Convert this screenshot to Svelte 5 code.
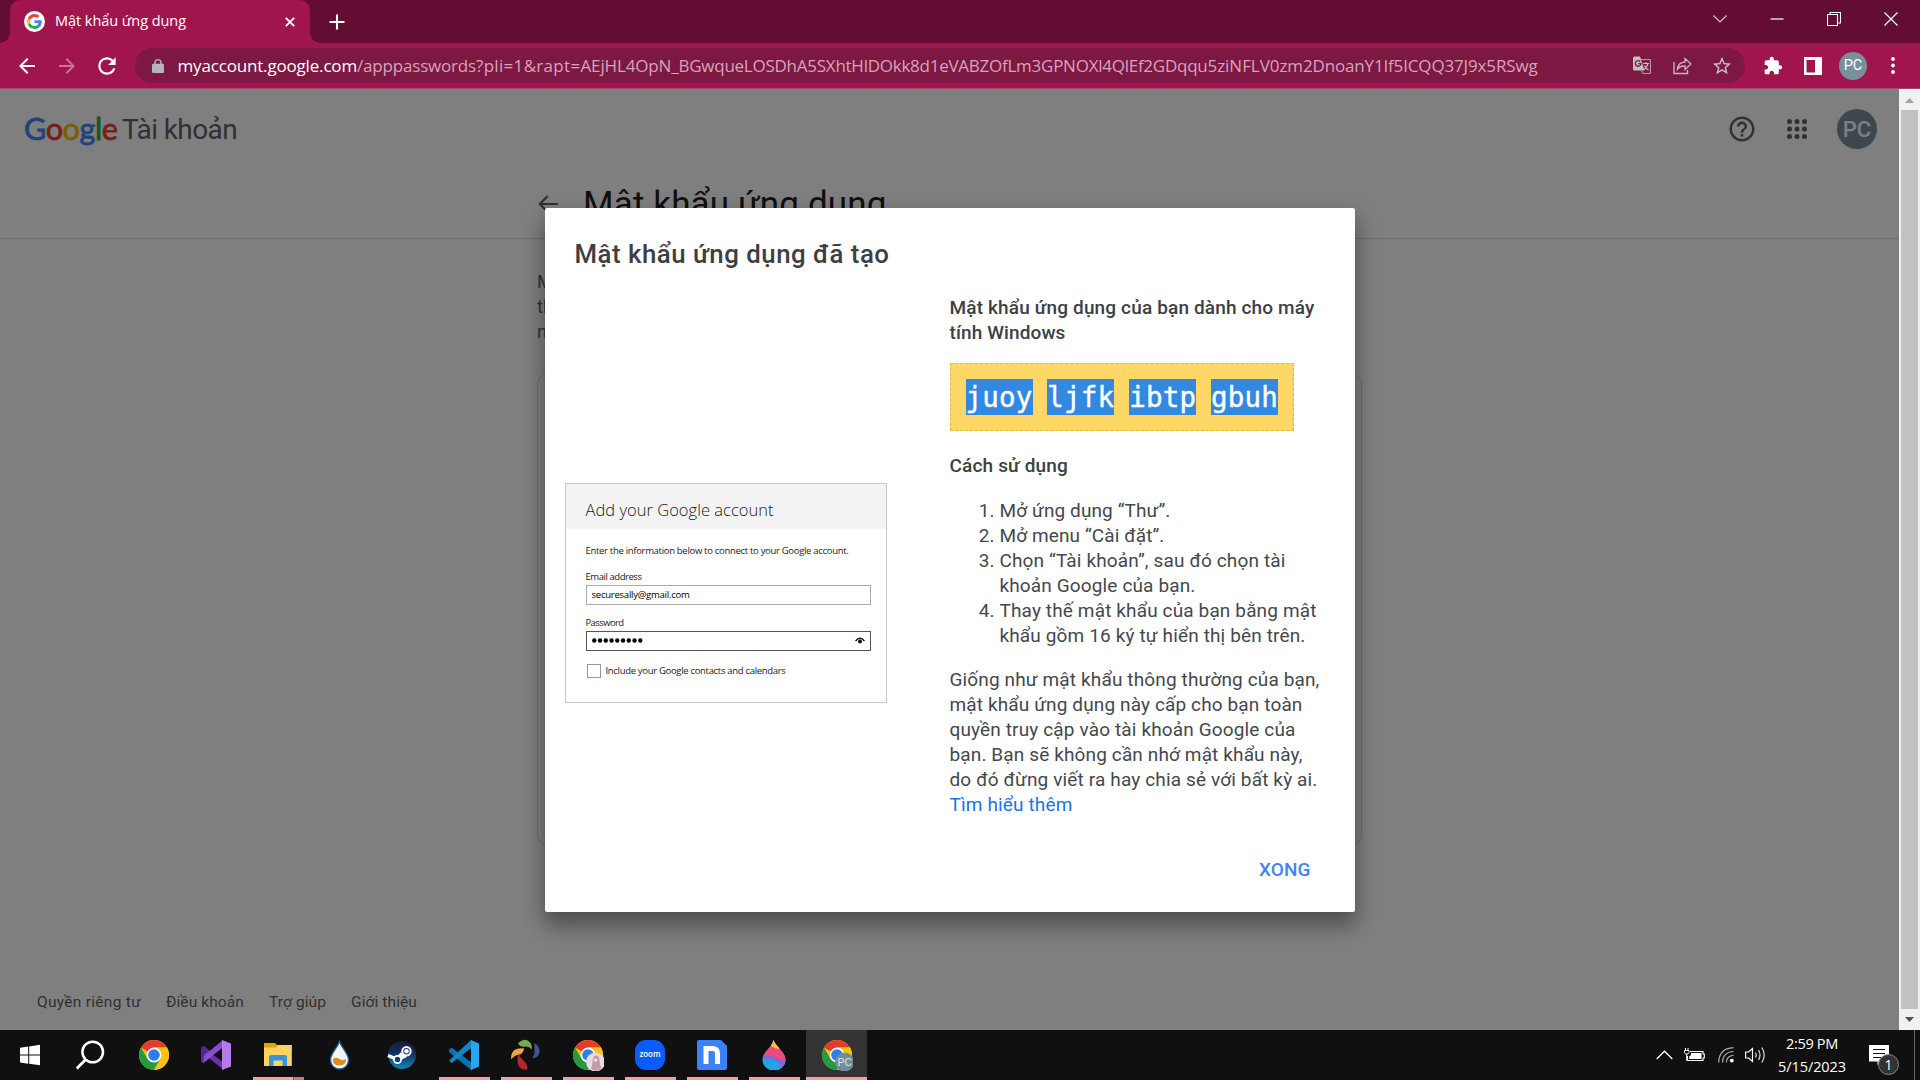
<script>
  // Tracks a single line of text so that it fills the given measure.
  function fit(node, width) {
    const natural = node.getBoundingClientRect().width;
    const count = [...node.textContent].length;
    node.style.letterSpacing = (width - natural) / count + 'px';
  }

  const url = [
    ['/apppasswords', 119],
    ['?pli=1&rapt=', 104.5],
    ['AEjHL4OpN_', 98],
    ['BGwqueLOSDhA5SXhtHlDOkk8d1eVABZOfLm3GPNOXl4QlEf2GDqqu', 529],
    ['5ziNFLV0', 72],
    ['zm2DnoanY1If5ICQQ37J9x5RSwg', 258]
  ];
  const heading = [['Mật khẩu ứng dụng của bạn dành cho máy', 365], ['tính Windows', 116]];
  const words = ['juoy', 'ljfk', 'ibtp', 'gbuh'];
  const steps = [
    [['Mở ứng dụng “Thư”.', 171]],
    [['Mở menu “Cài đặt”.', 165]],
    [['Chọn “Tài khoản”, sau đó chọn tài', 286], ['khoản Google của bạn.', 196]],
    [['Thay thế mật khẩu của bạn bằng mật', 317], ['khẩu gồm 16 ký tự hiển thị bên trên.', 306]]
  ];
  const note = [
    ['Giống như mật khẩu thông thường của bạn,', 370],
    ['mật khẩu ứng dụng này cấp cho bạn toàn', 353],
    ['quyền truy cập vào tài khoản Google của', 346],
    ['bạn. Bạn sẽ không cần nhớ mật khẩu này,', 353],
    ['do đó đừng viết ra hay chia sẻ với bất kỳ ai.', 368]
  ];
  const footer = [['Quyền riêng tư', 104], ['Điều khoản', 78], ['Trợ giúp', 57], ['Giới thiệu', 66]];
  const logo = [['G', 'b'], ['o', 'r'], ['o', 'y'], ['g', 'b'], ['l', 'g'], ['e', 'r']];
  const apps = ['start', 'search', 'chrome', 'vs', 'files', 'drop', 'steam', 'code', 'petals', 'chrome-a', 'zoom', 'nox', 'paint', 'chrome-pc'];
  const running = ['files', 'code', 'petals', 'chrome-a', 'zoom', 'nox', 'paint', 'chrome-pc'];
</script>

{#snippet googleG()}
  <svg class="g" viewBox="0 0 48 48">
    <path fill="#ea4335" d="M24 9.5c3.54 0 6.71 1.22 9.21 3.6l6.85-6.85C35.9 2.38 30.47 0 24 0 14.62 0 6.51 5.38 2.56 13.22l7.98 6.19C12.43 13.72 17.74 9.5 24 9.5z" />
    <path fill="#4285f4" d="M46.98 24.55c0-1.57-.15-3.09-.38-4.55H24v9.02h12.94c-.58 2.96-2.26 5.48-4.78 7.18l7.73 6c4.51-4.18 7.09-10.36 7.09-17.65z" />
    <path fill="#fbbc05" d="M10.53 28.59c-.48-1.45-.76-2.99-.76-4.59s.27-3.14.76-4.59l-7.98-6.19C.92 16.46 0 20.12 0 24c0 3.88.92 7.54 2.56 10.78l7.97-6.19z" />
    <path fill="#34a853" d="M24 48c6.48 0 11.93-2.13 15.89-5.81l-7.73-6c-2.15 1.45-4.92 2.3-8.16 2.3-6.26 0-11.57-4.22-13.47-9.91l-7.98 6.19C6.51 42.62 14.62 48 24 48z" />
  </svg>
{/snippet}

{#snippet chrome()}
  <circle cx="15" cy="15" r="15" fill="#fbc116" />
  <path d="M15 15 2 7.5A15 15 0 0 1 28 7.5H15z" fill="#e33b2e" />
  <path d="M2 7.5A15 15 0 0 0 15 30l6.5-11.2L8.5 18.8z" fill="#249a41" />
  <path d="M15 30A15 15 0 0 0 28 7.5H15L21.5 18.8z" fill="#fbc116" />
  <circle cx="15" cy="15" r="7.4" fill="#fff" />
  <circle cx="15" cy="15" r="5.8" fill="#2f7de9" />
{/snippet}

<div class="screen">
  <div class="tabstrip">
    <div class="tab">
      <span class="favicon">{@render googleG()}</span>
      <span class="tabtitle"><span class="line" use:fit={131}>Mật khẩu ứng dụng</span></span>
      <svg class="x" viewBox="0 0 10 10"><path d="M.8.8l8.4 8.4M9.2.8L.8 9.2" stroke="#fff" stroke-width="1.9" /></svg>
    </div>
    <svg class="plus" viewBox="0 0 16 16"><path d="M8 .5v15M.5 8h15" stroke="#fff" stroke-width="2.1" /></svg>
    <div class="winbtns">
      <span><svg width="14" height="8" viewBox="0 0 14 8"><path d="M.5.5L7 7 13.500.5" fill="none" stroke="#d5c3cc" stroke-width="1.1" /></svg></span>
      <span><svg width="14" height="2" viewBox="0 0 14 2"><path d="M.5 1h13" stroke="#fff" stroke-width="1.2" /></svg></span>
      <span><svg width="14" height="14" viewBox="0 0 14 14"><path d="M.5 2.500h10v11H.5zM3 2.500V.5h10.500v10.500H11" fill="none" stroke="#fff" stroke-width="1.1" /></svg></span>
      <span><svg width="14" height="14" viewBox="0 0 14 14"><path d="M.5.5l13 13M13.500.5l-13 13" stroke="#fff" stroke-width="1.2" /></svg></span>
    </div>
  </div>

  <div class="toolbar">
    <span class="cell"><svg width="24" height="24" viewBox="0 0 24 24"><path d="M20 11H7.830l5.590-5.590L12 4l-8 8 8 8 1.410-1.410L7.830 13H20v-2z" fill="#fff" /></svg></span>
    <span class="cell"><svg width="24" height="24" viewBox="0 0 24 24"><path d="M4 11h12.170l-5.590-5.590L12 4l8 8-8 8-1.410-1.410L16.170 13H4v-2z" fill="#c9719a" /></svg></span>
    <span class="cell"><svg width="26" height="26" viewBox="0 0 24 24"><path d="M17.650 6.350C16.200 4.900 14.210 4 12 4c-4.420 0-7.990 3.580-7.990 8s3.570 8 7.990 8c3.730 0 6.840-2.550 7.730-6h-2.080c-.82 2.330-3.040 4-5.650 4-3.310 0-6-2.690-6-6s2.690-6 6-6c1.660 0 3.140.69 4.220 1.780L13 11h7V4l-2.350 2.350z" fill="#fff" /></svg></span>
    <div class="omnibox">
      <svg class="lock" width="12" height="14" viewBox="4 1 16 21" preserveAspectRatio="none"><path d="M18 8h-1V6c0-2.760-2.240-5-5-5S7 3.240 7 6v2H6c-1.100 0-2 .9-2 2v10c0 1.100.9 2 2 2h12c1.100 0 2-.9 2-2V10c0-1.100-.9-2-2-2zM9 8V6c0-1.660 1.340-3 3-3s3 1.340 3 3v2H9z" fill="#b5b5bb" /></svg>
      <span class="host"><span class="line" use:fit={179.500}>myaccount.google.com</span></span>
      <span class="path">{#each url as [t, w]}<span class="line" use:fit={w}>{t}</span>{/each}</span>
      <span class="cell first">
        <svg width="18" height="19" viewBox="0 0 18 19">
          <path d="M8 3.500h8.500q1 0 1 1v12q0 1-1 1H10l-1.500-3" fill="none" stroke="#b992a4" stroke-width="1.2" />
          <path d="M1.500.5H7L11.500 14.500H1.500q-1.500 0-1.500-1.500V2Q0 .5 1.500.5z" fill="#c3bec2" />
          <path d="M7.300 5.700A2.800 2.800 0 1 0 7.900 7.700H5.300" fill="none" stroke="#7d1842" stroke-width="1.300" />
          <path d="M10 7.500h6M13 6v1.500M15 7.500q-1 4-4 6M11.500 9.500q1.500 3 4 4.500" fill="none" stroke="#c3bec2" stroke-width="1.200" />
        </svg>
      </span>
      <span class="cell"><svg width="19" height="19" viewBox="0 0 19 19"><path d="M1 6v11.500h13.500V14M4.500 13q.5-6.500 7.500-7V2.500l6 5.500-6 5.500V10q-5-.5-7.500 3z" fill="none" stroke="#c9b3be" stroke-width="1.400" /></svg></span>
      <span class="cell"><svg width="22" height="22" viewBox="0 0 24 24"><path d="M22 9.240l-7.190-.62L12 2 9.190 8.630 2 9.240l5.460 4.730L5.820 21 12 17.270 18.180 21l-1.630-7.030L22 9.240zM12 15.400l-3.760 2.270 1-4.280-3.320-2.880 4.380-.38L12 6.100l1.710 4.040 4.380.38-3.320 2.880 1 4.280L12 15.400z" fill="#cbbdc5" /></svg></span>
    </div>
    <span class="cell ext"><svg width="20" height="20" viewBox="0 0 24 24"><path d="M20.500 11H19V7c0-1.100-.9-2-2-2h-4V3.500C13 2.120 11.880 1 10.500 1S8 2.120 8 3.500V5H4c-1.100 0-1.990.9-1.990 2v3.800H3.500c1.490 0 2.700 1.210 2.700 2.700s-1.210 2.700-2.700 2.700H2V20c0 1.100.9 2 2 2h3.800v-1.500c0-1.490 1.210-2.700 2.700-2.700 1.490 0 2.700 1.210 2.700 2.700V22H17c1.100 0 2-.9 2-2v-4h1.500c1.380 0 2.500-1.120 2.500-2.500S21.880 11 20.500 11z" fill="#fff" /></svg></span>
    <span class="cell"><svg width="18" height="18" viewBox="0 0 18 18"><path d="M0 0h18v18H0zM2.500 3v12.500H11V3z" fill="#fff" fill-rule="evenodd" /></svg></span>
    <span class="cell"><span class="avatar small">PC</span></span>
    <span class="cell"><svg width="4" height="17" viewBox="0 0 4 17"><circle cx="2" cy="2" r="1.900" fill="#fff" /><circle cx="2" cy="8.500" r="1.900" fill="#fff" /><circle cx="2" cy="15" r="1.900" fill="#fff" /></svg></span>
  </div>

  <div class="viewport">
    <div class="page">
      <header>
        <div class="logo">{#each logo as [ch, c]}<span class={c}>{ch}</span>{/each}</div>
        <div class="product"><span class="line" use:fit={115}>Tài khoản</span></div>
        <svg class="help" width="30" height="30" viewBox="0 0 24 24"><path d="M11 18h2v-2h-2v2zm1-16C6.480 2 2 6.480 2 12s4.480 10 10 10 10-4.480 10-10S17.520 2 12 2zm0 18c-4.410 0-8-3.590-8-8s3.590-8 8-8 8 3.590 8 8-3.590 8-8 8zm0-14c-2.210 0-4 1.790-4 4h2c0-1.100.9-2 2-2s2 .9 2 2c0 2-3 1.750-3 5h2c0-2.250 3-2.500 3-5 0-2.210-1.790-4-4-4z" fill="#5f6368" /></svg>
        <svg class="apps" width="20" height="20" viewBox="0 0 20 20" fill="#5f6368">
          {#each [2.5, 10, 17.5] as cy}{#each [2.5, 10, 17.5] as cx}<circle {cx} {cy} r="2.500" />{/each}{/each}
        </svg>
        <span class="avatar large">PC</span>
      </header>
      <div class="subhead">
        <svg width="26" height="26" viewBox="0 0 24 24"><path d="M21 11H6.830l5.590-5.590L11 4l-8 8 8 8 1.410-1.410L6.830 13H21v-2z" fill="#5f6368" /></svg>
        <h1><span class="line" use:fit={303.500}>Mật khẩu ứng dụng</span></h1>
      </div>
      <div class="intro"><span>M</span><span>th</span><span>n</span></div>
      <div class="card"></div>
      <footer>
        {#each footer as [t, w]}<div><span class="line" use:fit={w}>{t}</span></div>{/each}
      </footer>

      <div class="scrim">
        <div class="dialog">
          <h2><span class="line" use:fit={315}>Mật khẩu ứng dụng đã tạo</span></h2>
          <div class="cols">
            <div class="shot">
              <div class="shothead"><span class="line" use:fit={188}>Add your Google account</span></div>
              <div class="shotbody">
                <p><span class="line" use:fit={263}>Enter the information below to connect to your Google account.</span></p>
                <p class="label"><span class="line" use:fit={56}>Email address</span></p>
                <div class="field"><span class="line" use:fit={98}>securesally@gmail.com</span></div>
                <p class="label two"><span class="line" use:fit={38}>Password</span></p>
                <div class="field dark">
                  <svg width="52" height="5" viewBox="0 0 52 5">{#each Array(9) as _, i}<circle cx={2.3 + i * 5.75} cy="2.500" r="2.200" />{/each}</svg>
                  <svg class="eye" width="10" height="7" viewBox="0 0 10 7"><path d="M.6 4Q5-1.500 9.400 4" fill="none" stroke="#111" stroke-width="1.500" /><circle cx="5" cy="4.500" r="2" fill="#111" /></svg>
                </div>
                <div class="check"><i></i><span class="line" use:fit={180}>Include your Google contacts and calendars</span></div>
              </div>
            </div>
            <div class="text">
              <h3>{#each heading as [t, w]}<div><span class="line" use:fit={w}>{t}</span></div>{/each}</h3>
              <div class="code">{#each words as w}<mark><span class="line" use:fit={67}>{w}</span></mark>{/each}</div>
              <h3 class="how"><span class="line" use:fit={118.500}>Cách sử dụng</span></h3>
              <ol>
                {#each steps as lines, i}
                  <li><span class="num">{i + 1}.</span><div>{#each lines as [t, w]}<div><span class="line" use:fit={w}>{t}</span></div>{/each}</div></li>
                {/each}
              </ol>
              <div class="note">
                {#each note as [t, w]}<div><span class="line" use:fit={w}>{t}</span></div>{/each}
                <div class="link"><span class="line" use:fit={123}>Tìm hiểu thêm</span></div>
              </div>
            </div>
          </div>
          <div class="action"><span class="line" use:fit={51.500}>XONG</span></div>
        </div>
      </div>
    </div>
    <div class="scrollbar">
      <svg width="21" height="21" viewBox="0 0 21 21"><path d="M6 14l4.500-5 4.500 5z" fill="#a3a3a3" /></svg>
      <div class="thumb"></div>
      <svg width="21" height="21" viewBox="0 0 21 21"><path d="M6 8l4.500 5L15 8z" fill="#505050" /></svg>
    </div>
  </div>

  <div class="taskbar">
    {#each apps as app}
      <div class="task" class:running={running.includes(app)} class:multi={app === 'files'} class:active={app === 'chrome-pc'}>
        <svg width="32" height="32" viewBox="-1 -1 32 32">
          {#if app === 'start'}
            <path d="M5 7.700l8.200-1.200v8.100H5zM14.200 6.400L25 4.800v9.800H14.200zM5 15.600h8.200v8.100L5 22.600zM14.200 15.600H25v9.700l-10.800-1.500z" fill="#fff" />
          {:else if app === 'search'}
            <circle cx="15.700" cy="12" r="10.300" fill="none" stroke="#fff" stroke-width="2.500" /><path d="M8.700 19.500L-.2 28.500" stroke="#fff" stroke-width="2.800" />
          {:else if app === 'chrome'}
            {@render chrome()}
          {:else if app === 'vs'}
            <path d="M0 8l3-2 20 17v7L2.500 14v8L0 21z" fill="#6a33ad" />
            <path d="M0 21l2.500 2L22 7.500V0L2.500 16z" fill="#8a4bd1" />
            <path d="M0 8l3-2 5 4.500-5.500 4.500v7L0 21z" fill="#54278f" />
            <path d="M21 0l9 3.500v23L21 30z" fill="#b57bee" />
            <path d="M21 8.500v13L12.500 15z" fill="#101010" />
          {:else if app === 'files'}
            <path d="M1 3h11l2 2h14.500v7H1z" fill="#e3a008" /><path d="M1 7.500h12l2-2.500h13.800v21H1z" fill="#ffd45e" />
            <path d="M6 26V17q0-2 2-2h14q2 0 2 2v9h-4.500v-5.500h-9V26z" fill="#3794dd" />
          {:else if app === 'drop'}
            <path d="M14.500 1.500C16.500 8 23.500 13.500 23.500 20a9 9 0 0 1-18 0C5.500 13.500 12.500 8 14.500 1.500z" fill="#f4f4fb" stroke="#2b6a93" stroke-width="1.300" />
            <path d="M8 19q3-2.500 6.500 0t6.500-.5q.5 7-6.500 7T8 19z" fill="#dd8c28" />
          {:else if app === 'steam'}
            <defs><linearGradient id="st" x1="0" y1="0" x2="0" y2="1"><stop offset="0" stop-color="#171a3a" /><stop offset=".5" stop-color="#123765" /><stop offset="1" stop-color="#1387b8" /></linearGradient></defs>
            <circle cx="15" cy="15" r="14" fill="url(#st)" />
            <path d="M1 15.500l9 3.800 5-6M14 18l5-2.500" stroke="#fff" stroke-width="3.500" fill="none" /><circle cx="10.500" cy="19.500" r="3.600" fill="#123f6b" stroke="#fff" stroke-width="1.800" />
            <circle cx="19.500" cy="11.300" r="4.200" fill="#17305c" stroke="#fff" stroke-width="2" /><circle cx="19.500" cy="11.300" r="2.300" fill="#fff" />
          {:else if app === 'code'}
            <path d="M0 10l2.500-2.500L24 23.500 22 30 0 12z" fill="#0b70b5" /><path d="M0 20.500L22 0l2 7L2.500 23z" fill="#1285c9" /><path d="M22 0l8 3.500v23L22 30z" fill="#2ba4ee" /><path d="M22 8.500v13L13.500 15z" fill="#101010" />
          {:else if app === 'petals'}
            <path d="M7 3.500Q14-3.500 19.500 3q2 3 1 6.500-2-3-6-3Q9.500 7.500 7 3.500z" fill="#76a84c" />
            <path d="M23.500 3q6 4 5 9.500-1 5.500-7.500 5.500 3-3.500 2.500-7.500-.5-4 0-7.500z" fill="#3e5590" />
            <path d="M.3 19.500q-1-6 3-9.500 4-2.500 10-1.500-1.500 6-6.500 6.500-4 .5-6.500 4.500z" fill="#eda545" />
            <path d="M7.500 13.500q1 4 5 7 5 4.500 3.500 9-6 1-8.500-4-2-6 0-12z" fill="#b8262c" />
          {:else if app === 'chrome-a'}
            {@render chrome()}
            <circle cx="22.500" cy="22" r="9.500" fill="#e5dde2" /><path d="M18 29q1.500-4 1.500-8 .5-5.500 3.500-5.500 3.500.5 3.500 5 .5 5 2 8-5 4-10.500.5z" fill="#c79aa6" /><circle cx="22.500" cy="20" r="1.800" fill="#efdfe0" />
          {:else if app === 'zoom'}
            <rect width="30" height="30" rx="11" fill="#0b5cff" /><text x="15" y="17.300" class="zoomtext" textLength="21" lengthAdjust="spacingAndGlyphs">zoom</text>
          {:else if app === 'nox'}
            <path d="M2 0h22l6 6v22q0 2-2 2H2q-2 0-2-2V2q0-2 2-2z" fill="#3b82f6" /><path d="M9 24V8.500h6.500q5 0 5 5V24" fill="none" stroke="#fff" stroke-width="5" />
          {:else if app === 'paint'}
            <defs><clipPath id="pd"><path d="M14.500 0C16 6 26.500 12 26.500 20a11.500 10.500 0 0 1-23 0C3.500 12 13 8 14.500 0z" /></clipPath></defs>
            <g clip-path="url(#pd)"><path d="M0 0h30v30H0z" fill="#22a3e8" /><path d="M0 0h30v22Q22 30 20 24T0 19z" fill="#8e63cc" /><path d="M0 0h30v18q-8 4-12 0T0 17z" fill="#ec4b80" /><path d="M10 0h10v9q-3 0-8-3z" fill="#ffc81f" /></g>
          {:else}
            {@render chrome()}
            <circle cx="22.500" cy="22" r="9.500" fill="#738c98" /><text x="22.500" y="26" class="pctext">PC</text>
          {/if}
        </svg>
      </div>
    {/each}
    <div class="tray">
      <svg width="17" height="10" viewBox="0 0 17 10"><path d="M.7 9L8.500 1.200 16.300 9" fill="none" stroke="#fff" stroke-width="1.300" /></svg>
      <svg class="bat" width="21" height="15" viewBox="0 0 21 15"><path d="M6 3.500h13v2.500h1.300v4h-1.300v2.500H3.500V8" fill="none" stroke="#fff" stroke-width="1.100" /><path d="M7 5h10.500v6H5.200V8.500L7 7z" fill="#fff" /><path d="M1.500 0v2.500M4 0v2.500M.5 2.500H5v2L3.800 6H1.700L.5 4.500zM2.700 6v6.500h2" fill="none" stroke="#fff" stroke-width="1" /></svg>
      <svg class="wifi" width="16" height="16" viewBox="0 0 16 16"><g fill="none" stroke="#a9a9a9" stroke-width="1.200"><path d="M.7 15.500Q1 1.500 15.500.7" /><path d="M4.500 15.500Q4.800 5 15.500 4.500" /><path d="M8.300 15.500Q8.500 8.800 15.500 8.300" /></g><circle cx="13.800" cy="13.600" r="1.900" fill="#fff" /></svg>
      <svg class="vol" width="21" height="18" viewBox="0 0 21 18"><path d="M.6 6h3L7.500 2.500v13L3.600 12h-3z" fill="none" stroke="#fff" stroke-width="1.200" /><path d="M10.500 6.500q1.500 2.500 0 5M13.500 4q3 5 0 10M16.800 1.500q4.800 7.500 0 15" fill="none" stroke="#ddd" stroke-width="1.200" /></svg>
      <div class="clock"><div><span class="line" use:fit={52}>2:59 PM</span></div><div><span class="line" use:fit={68}>5/15/2023</span></div></div>
      <div class="notif">
        <svg width="20" height="20" viewBox="0 0 20 20"><path d="M0 0h20v16.500h-8L8.500 20v-3.500H0z" fill="#fff" /><path d="M4 4.500h12M4 8.500h12M4 12.500h8" stroke="#101010" stroke-width="1.200" /></svg>
        <span class="badge">1</span>
      </div>
      <i class="peek"></i>
    </div>
  </div>
</div>

<style>
  :global(body) { margin: 0; overflow: hidden; background: #101010; }
  .screen { width: 1920px; height: 1080px; display: flex; flex-direction: column; overflow: hidden; font-family: "Roboto", sans-serif; }
  .screen * { box-sizing: border-box; }
  svg { display: block; flex: none; }
  .line { display: inline-block; white-space: nowrap; }
  h1, h2, h3, p, ol { margin: 0; padding: 0; font-weight: 400; }

  .tabstrip { height: 43px; background: #640d32; display: flex; align-items: center; font-family: "Open Sans", "Noto Sans", sans-serif; }
  .tab { position: relative; width: 300px; height: 43px; margin-left: 10px; padding: 0 15px 0 14px; background: #a1154e; border-radius: 10px 10px 0 0; display: flex; align-items: center; }
  .tab::before, .tab::after { content: ""; position: absolute; bottom: 0; width: 10px; height: 10px; }
  .tab::before { left: -10px; background: radial-gradient(circle at 0 0, #640d32 9.500px, #a1154e 10px); }
  .tab::after { right: -10px; background: radial-gradient(circle at 100% 0, #640d32 9.500px, #a1154e 10px); }
  .favicon { width: 21px; height: 21px; border-radius: 50%; background: #fff; display: flex; align-items: center; justify-content: center; margin-right: 10px; }
  .favicon .g { width: 15px; height: 15px; }
  .tabtitle { color: #fff; font-size: 14.500px; line-height: 20px; flex: 1; padding-bottom: 1px; }
  .x { width: 10px; height: 10px; }
  .plus { width: 16px; height: 16px; margin-left: 19px; }
  .winbtns { display: flex; height: 37px; margin-left: auto; margin-right: 1px; align-self: flex-start; }
  .winbtns span { width: 57px; display: flex; align-items: center; justify-content: center; }

  .toolbar { height: 46px; background: #a1154e; border-bottom: 1px solid #b0406f; display: flex; align-items: center; padding: 0 7px; }
  .cell { width: 40px; flex: none; display: flex; align-items: center; justify-content: center; }
  .omnibox { height: 35px; width: 1610px; margin: 0 0 0 8px; padding: 0 3px 0 16.500px; border-radius: 18px; background: #7d1842; display: flex; align-items: center; font: 17px/24px "Open Sans", "Noto Sans", sans-serif; }
  .lock { margin-right: 14px; }
  .host { color: #fff; }
  .path { color: #d8a3ba; display: flex; }
  .first { margin-left: auto; }
  .ext { margin-left: 8px; }
  .avatar { border-radius: 50%; color: #fff; display: flex; align-items: center; justify-content: center; background: #78909c; }
  .small { width: 28px; height: 28px; font-size: 14.500px; }
  .large { width: 40px; height: 40px; font-size: 22px; font-weight: 500; color: #fff; }

  .viewport { height: 941px; display: flex; }
  .page { position: relative; width: 1899px; background: #fff; display: flex; flex-direction: column; overflow: hidden; }
  header { height: 80px; padding: 0 22px 0 24px; display: flex; align-items: center; }
  .logo { width: 98px; padding-bottom: 2px; font: 30.500px/40px "Lato", sans-serif; letter-spacing: -0.400px; -webkit-text-stroke: 0.800px; }
  .b { color: #4285f4; }
  .r { color: #ea4335; }
  .y { color: #fbbc05; }
  .logo .g { color: #34a853; }
  .product { font-size: 28px; line-height: 40px; padding-top: 1px; color: #5f6368; }
  .help { margin-left: auto; margin-right: 30px; }
  .apps { margin-right: 30px; }
  .subhead { height: 70px; padding-left: 535px; border-bottom: 1px solid #dadce0; display: flex; align-items: center; }
  h1 { margin-left: 22px; padding-top: 3px; font-size: 35px; line-height: 44px; color: #202124; }
  .intro { margin: 31px 0 0 537px; width: 824px; height: 75px; display: flex; flex-direction: column; font-size: 18.500px; line-height: 25px; color: #5f6368; }
  .card { width: 825px; height: 471px; margin: 29px 0 0 537px; border: 1px solid #dadce0; border-radius: 10px; }
  footer { display: flex; gap: 25px; margin-top: auto; padding: 0 0 15px 37px; font-size: 15.500px; line-height: 25px; color: #5f6368; }

  .scrim { position: absolute; inset: 0; background: rgba(0, 0, 0, .5); display: flex; align-items: center; justify-content: center; }
  .dialog { width: 810px; height: 704px; background: #fff; border-radius: 2px; padding: 26px 0 0; box-shadow: 0 15px 20px rgba(0, 0, 0, .24), 0 8px 24px rgba(0, 0, 0, .22); display: flex; flex-direction: column; color: #3c4043; }
  h2 { padding-left: 30px; font-size: 25.800px; line-height: 40px; font-weight: 500; }
  .cols { display: flex; gap: 63px; padding-left: 20px; margin-top: 21px; height: 522px; font-size: 19px; line-height: 25px; color: #44484b; }
  .text { width: 380px; }
  h3 { font-size: 19px; font-weight: 500; color: #3c4043; }
  .code { width: 344px; height: 68px; margin: 18px 0 22px; padding: 0 14.500px 0 15px; border: 1px dashed #dfb84f; background: #ffd766; display: flex; align-items: center; justify-content: space-between; }
  mark { background: #3388e2; color: #fff; width: 67px; height: 36px; font: 27.500px/37px "DejaVu Sans Mono", monospace; -webkit-text-stroke: 0.400px #fff; }
  .how { margin-bottom: 20px; }
  ol { list-style: none; }
  li { display: flex; }
  .num { width: 50px; padding-right: 5px; text-align: right; }
  .note { margin-top: 19px; }
  .link { color: #1a73e8; }
  .action { align-self: flex-end; margin: 40px 44px 0 0; font-size: 19px; line-height: 25px; font-weight: 500; color: #4285f4; }

  .shot { width: 322px; height: 220px; margin-top: 188px; border: 1px solid #c8c8c8; font-family: "Open Sans", sans-serif; color: #222; }
  .shothead { height: 45px; padding: 4px 0 0 20px; background: #f3f3f3; font-size: 16.500px; line-height: 44px; font-weight: 300; }
  .shotbody { padding: 15px 15px 0 20px; font-size: 9.500px; line-height: 14px; }
  .label { margin-top: 12px; }
  .label.two { margin-top: 11px; }
  .field { height: 20px; margin-top: 1px; padding: 0 5px; border: 1px solid #aaa; display: flex; align-items: center; color: #000; }
  .field.dark { border-color: #555; }
  .eye { margin-left: auto; }
  .check { display: flex; align-items: center; gap: 5px; margin: 13px 0 0 1px; }
  .check i { width: 14px; height: 14px; border: 1px solid #999; }

  .scrollbar { width: 21px; background: #f1f1f1; display: flex; flex-direction: column; align-items: center; }
  .thumb { width: 17px; flex: 1; background: #c1c1c1; }

  .taskbar { height: 50px; background: #101010; display: flex; gap: 2px; }
  .task { width: 60px; height: 50px; display: flex; align-items: center; justify-content: center; position: relative; }
  .running::after { content: ""; position: absolute; left: 5px; bottom: 0; width: 51px; height: 3px; background: #ff99a4; }
  .multi::after { width: 51px; background: linear-gradient(90deg, #ff99a4 40px, #8c555b 40px, #8c555b 41px, #c87880 41px); }
  .active { background: #333; width: 61px; }
  .active::after { left: 0; width: 61px; }
  .zoomtext { fill: #fff; font: 600 8px "Open Sans", sans-serif; text-anchor: middle; }
  .pctext { fill: #dfe6e9; font: 11px "Roboto", sans-serif; text-anchor: middle; }

  .tray { margin-left: auto; display: flex; align-items: center; height: 50px; font-family: "Open Sans", sans-serif; color: #fff; }
  .bat { margin-left: 11px; }
  .wifi { margin-left: 13px; }
  .vol { margin-left: 11px; }
  .clock { width: 92px; display: flex; flex-direction: column; align-items: center; font-size: 14.500px; line-height: 23px; }
  .notif { position: relative; margin-left: 11px; margin-right: 25px; }
  .badge { position: absolute; left: 9px; top: 9px; width: 21px; height: 21px; border: 1px solid #888; border-radius: 50%; background: #333; font-size: 14px; line-height: 19px; text-align: center; }
  .peek { width: 1px; height: 50px; background: #666; margin-right: 5px; }
</style>
